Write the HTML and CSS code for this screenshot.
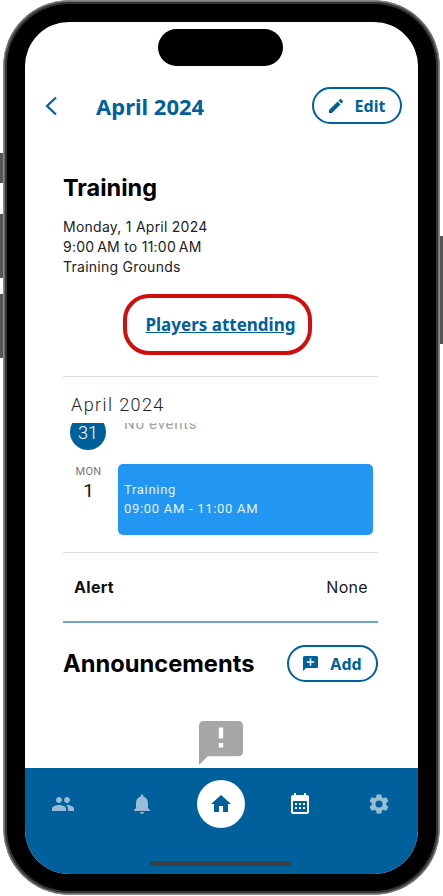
FILE: index.html
```html
<!DOCTYPE html>
<html lang="en">
<head>
  <meta charset="UTF-8" />
  <title>April 2024</title>
  <link rel="stylesheet" href="styles.css">
</head>
<body>
  <div class="phone">
    <span class="side-btn side-mute"></span>
    <span class="side-btn side-up"></span>
    <span class="side-btn side-down"></span>
    <span class="side-btn side-power"></span>
    <div class="screen">
      <div class="notch"></div>

      <header class="topbar">
        <svg class="back" width="12" height="20" viewBox="0 0 12 20"><path d="M11 1.5 2 10l9 8.5" fill="none" stroke="#00609c" stroke-width="2.2"/></svg>
        <h2 class="month-title">April 2024</h2>
        <button class="pill pill-edit">
          <svg width="14" height="14" viewBox="3 3 18 18"><path fill="#00609c" d="M3 17.25V21h3.75L17.81 9.94l-3.75-3.75L3 17.25zM20.71 7.04a1 1 0 0 0 0-1.41l-2.34-2.34a1 1 0 0 0-1.41 0l-1.83 1.83 3.75 3.75 1.83-1.83z"/></svg>
          <span>Edit</span>
        </button>
      </header>

      <main class="content">
        <h1 class="event-title">Training</h1>
        <p class="event-info">Monday, 1 April 2024<br>9:00&#8201;AM to 11:00&#8201;AM<br>Training Grounds</p>

        <div class="attending-wrap">
          <a class="attending" href="#">Players attending</a>
        </div>

        <hr class="rule">

        <div class="agenda">
          <div class="agenda-month">April 2024</div>
          <div class="agenda-clip">
            <div class="agenda-prev">
              <span class="day-circle">31</span>
              <span class="no-events">No events</span>
            </div>
          </div>
          <div class="agenda-row">
            <div class="day-label">
              <span class="day-name">MON</span>
              <span class="day-num">1</span>
            </div>
            <div class="event-card">
              <span>Training</span>
              <span>09:00 AM - 11:00 AM</span>
            </div>
          </div>
        </div>

        <hr class="rule">

        <div class="alert-row">
          <strong>Alert</strong>
          <span>None</span>
        </div>

        <hr class="rule rule-blue">

        <div class="announce-head">
          <h2>Announcements</h2>
          <button class="pill pill-add">
            <svg width="15" height="15" viewBox="2 2 20 20"><path fill="#00609c" d="M20 2H4a2 2 0 0 0-2 2v18l4-4h14a2 2 0 0 0 2-2V4a2 2 0 0 0-2-2zm-3 9h-4v4h-2v-4H7V9h4V5h2v4h4v2z"/></svg>
            <span>Add</span>
          </button>
        </div>

        <div class="empty-icon">
          <svg width="44" height="44" viewBox="2 2 20 20"><path fill="#a6a6a6" d="M20 2H4a2 2 0 0 0-2 2v18l4-4h14a2 2 0 0 0 2-2V4a2 2 0 0 0-2-2zm-7 12h-2v-2h2v2zm0-4h-2V5h2v5z"/></svg>
        </div>
      </main>

      <nav class="tabbar">
        <svg width="24" height="24" viewBox="0 0 24 24"><path fill="#99bdd7" d="M16 11c1.66 0 2.99-1.34 2.99-3S17.66 5 16 5s-3 1.34-3 3 1.34 3 3 3zm-8 0c1.66 0 2.99-1.34 2.99-3S9.66 5 8 5 5 6.34 5 8s1.34 3 3 3zm0 2c-2.33 0-7 1.17-7 3.5V19h14v-2.5C15 14.17 10.33 13 8 13zm8 0c-.29 0-.62.02-.97.05 1.16.84 1.97 1.97 1.97 3.45V19h6v-2.5c0-2.33-4.67-3.5-7-3.5z"/></svg>
        <svg width="24" height="24" viewBox="0 0 24 24"><path fill="#99bdd7" d="M12 22c1.1 0 2-.9 2-2h-4c0 1.1.9 2 2 2zm6-6v-5c0-3.07-1.63-5.64-4.5-6.32V4c0-.83-.67-1.5-1.5-1.5s-1.5.67-1.5 1.5v.68C7.64 5.36 6 7.92 6 11v5l-2 2v1h16v-1l-2-2z"/></svg>
        <span class="home-btn">
          <svg width="24" height="24" viewBox="0 0 24 24"><path fill="#00609c" d="M10 20v-6h4v6h5v-8h3L12 3 2 12h3v8z"/></svg>
        </span>
        <svg width="24" height="24" viewBox="0 0 24 24"><path fill="#fff" fill-rule="evenodd" d="M6 1h2v2h8V1h2v2h1a2 2 0 0 1 2 2v15a2 2 0 0 1-2 2H5a2 2 0 0 1-2-2V5a2 2 0 0 1 2-2h1V1zM5 9v11h14V9H5zm2 2h2v2H7v-2zm4 0h2v2h-2v-2zm4 0h2v2h-2v-2zm-8 4h2v2H7v-2zm4 0h2v2h-2v-2zm4 0h2v2h-2v-2z"/></svg>
        <svg width="24" height="24" viewBox="0 0 24 24"><path fill="#99bdd7" d="M19.14 12.94c.04-.3.06-.61.06-.94 0-.32-.02-.64-.07-.94l2.03-1.58a.49.49 0 0 0 .12-.61l-1.92-3.32a.49.49 0 0 0-.59-.22l-2.39.96c-.5-.38-1.03-.7-1.62-.94l-.36-2.54a.48.48 0 0 0-.48-.41h-3.84a.48.48 0 0 0-.47.41l-.36 2.54c-.59.24-1.13.57-1.62.94l-2.39-.96a.48.48 0 0 0-.59.22L2.74 8.87a.48.48 0 0 0 .12.61l2.03 1.58c-.05.3-.09.63-.09.94s.02.64.07.94l-2.03 1.58a.49.49 0 0 0-.12.61l1.92 3.32c.12.22.37.29.59.22l2.39-.96c.5.38 1.03.7 1.62.94l.36 2.54c.05.24.24.41.48.41h3.84c.24 0 .44-.17.47-.41l.36-2.54c.59-.24 1.13-.56 1.62-.94l2.39.96c.22.08.47 0 .59-.22l1.92-3.32a.48.48 0 0 0-.12-.61l-2.01-1.58zM12 15.6A3.6 3.6 0 1 1 12 8.4a3.6 3.6 0 0 1 0 7.2z"/></svg>
      </nav>
      <div class="home-bar"></div>
    </div>
  </div>
</body>
</html>
```

FILE: styles.css
```css
* {
  box-sizing: border-box;
}
html, body {
  margin: 0;
  background: #fff;
}
body {
  width: 443px;
  height: 896px;
  overflow: hidden;
  font-family: 'Inter', sans-serif;
  color: #1a1a1a;
}
h1, h2, p {
  margin: 0;
}

/* device frame */
.phone {
  position: relative;
  width: 437px;
  height: 895px;
  margin-left: 3px;
  padding: 21px;
  background: #000;
  border: 1px solid #8a8a8a;
  border-radius: 66px;
  box-shadow: inset 0 0 0 1px #6e6e6e, inset 0 0 0 3px #333;
}
.side-btn {
  position: absolute;
  width: 3px;
  background: #555;
}
.side-mute { left: -4px; top: 152px; height: 30px; }
.side-up { left: -4px; top: 213px; height: 64px; }
.side-down { left: -4px; top: 293px; height: 64px; }
.side-power { right: -4px; top: 235px; height: 108px; }

.screen {
  position: relative;
  display: flex;
  flex-direction: column;
  height: 852px;
  width: 393px;
  background: #fff;
  border-radius: 44px;
  overflow: hidden;
}
.notch {
  position: absolute;
  top: 7px;
  left: 133px;
  width: 125px;
  height: 37px;
  background: #000;
  border-radius: 19px;
}

/* header */
.topbar {
  display: flex;
  align-items: center;
  height: 37px;
  margin-top: 65px;
  padding: 0 16px 0 20px;
}
.back {
  margin-right: 39px;
}
.month-title {
  flex: 1;
  font-family: 'Noto Sans', sans-serif;
  font-size: 22px;
  font-weight: 700;
  color: #00609c;
}
.pill {
  display: flex;
  align-items: center;
  justify-content: center;
  gap: 12px;
  height: 37px;
  background: #fff;
  border: 2px solid #00609c;
  border-radius: 19px;
  font-family: 'Noto Sans', sans-serif;
  font-size: 16px;
  font-weight: 700;
  color: #00609c;
}
.pill-edit {
  width: 90px;
}
.pill-add {
  width: 91px;
}

/* event details */
.content {
  flex: 1;
  min-height: 0;
  padding: 0 40px 0 38px;
}
.event-title {
  margin-top: 49px;
  font-size: 23.5px;
  line-height: 30px;
  font-weight: 700;
  color: #000;
}
.event-info {
  margin-top: 14px;
  font-size: 14px;
  line-height: 20px;
  letter-spacing: 0.25px;
  color: #222;
}
.attending-wrap {
  display: flex;
  margin-top: 17px;
  padding-left: 60px;
}
.attending {
  display: flex;
  align-items: center;
  justify-content: center;
  width: 189px;
  height: 61px;
  padding-left: 6px;
  border: 4px solid #d10d0d;
  border-radius: 26px;
  font-family: 'Noto Sans', sans-serif;
  font-size: 17px;
  font-weight: 700;
  color: #00609c;
  text-decoration: underline;
}
.rule {
  height: 1px;
  margin: 0;
  border: 0;
  background: #dcdcdc;
}
.attending-wrap + .rule {
  margin-top: 21px;
}

/* agenda */
.agenda {
  height: 157px;
}
.agenda-month {
  margin: 18px 0 0 8px;
  font-family: 'Roboto', sans-serif;
  font-size: 18px;
  line-height: 20px;
  font-weight: 300;
  letter-spacing: 1.4px;
  color: #222;
}
.agenda-clip {
  height: 27px;
  margin-top: 8px;
  overflow: hidden;
}
.agenda-prev {
  display: flex;
  gap: 18px;
  margin: -9px 0 0 7px;
}
.day-circle {
  flex: none;
  display: flex;
  align-items: center;
  justify-content: center;
  width: 36px;
  height: 36px;
  background: #00609c;
  border-radius: 50%;
  font-family: 'Roboto', sans-serif;
  font-size: 18px;
  font-weight: 300;
  color: #fff;
}
.no-events {
  font-family: 'Roboto', sans-serif;
  font-size: 15px;
  line-height: 20px;
  letter-spacing: 0.7px;
  color: #a0a0a0;
}
.agenda-row {
  display: flex;
  margin-top: 14px;
}
.day-label {
  display: flex;
  flex-direction: column;
  align-items: center;
  width: 51px;
  margin-right: 4px;
  font-family: 'Roboto', sans-serif;
}
.day-name {
  margin-top: 2px;
  font-size: 11px;
  line-height: 12px;
  letter-spacing: 0.4px;
  color: #777;
}
.day-num {
  margin-top: 1px;
  font-size: 19px;
  line-height: 24px;
  color: #111;
}
.event-card {
  display: flex;
  flex-direction: column;
  justify-content: center;
  gap: 2px;
  width: 255px;
  height: 71px;
  padding: 0 0 1px 6px;
  background: #2196f3;
  border-radius: 5px;
  font-family: 'Roboto', sans-serif;
  font-size: 13px;
  line-height: 17px;
  letter-spacing: 0.7px;
  color: #e3f2fd;
}

/* alert row */
.alert-row {
  display: flex;
  justify-content: space-between;
  align-items: center;
  height: 68px;
  padding: 0 10px 0 11px;
  font-size: 16px;
  letter-spacing: 0.3px;
}
.alert-row strong {
  font-weight: 700;
  color: #111;
}
.rule-blue {
  height: 2px;
  background: #6ea6cd;
}

/* announcements */
.announce-head {
  display: flex;
  align-items: center;
  justify-content: space-between;
  margin-top: 22px;
}
.announce-head h2 {
  font-size: 23.7px;
  font-weight: 700;
  color: #000;
}
.empty-icon {
  display: flex;
  justify-content: center;
  margin-top: 39px;
}

/* bottom nav */
.tabbar {
  flex: none;
  display: grid;
  grid-template-columns: repeat(5, 79px);
  grid-template-rows: 48px;
  justify-content: center;
  justify-items: center;
  align-items: center;
  height: 106px;
  padding: 12px 1px 0 0;
  background: #00609c;
}
.home-btn {
  display: flex;
  align-items: center;
  justify-content: center;
  width: 48px;
  height: 48px;
  background: #fff;
  border-radius: 50%;
}
.home-bar {
  position: absolute;
  left: 125px;
  bottom: 8px;
  width: 141px;
  height: 5px;
  background: #3a3f44;
  border-radius: 3px;
}
```
